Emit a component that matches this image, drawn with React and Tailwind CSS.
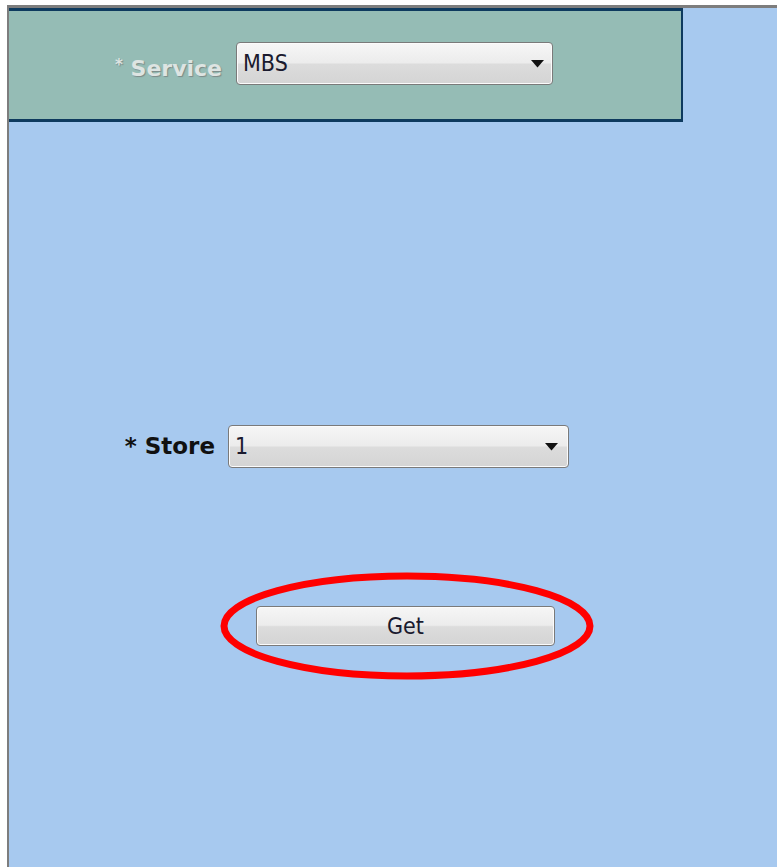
import React from "react";

const font = { fontFamily: '"DejaVu Sans", Verdana, sans-serif' };
const narrow = { fontFamily: '"DejaVu Sans Condensed", "DejaVu Sans", Tahoma, sans-serif' };

// glassy combo box like the old desktop theme
const Combo = ({ value, className, arrow }) => (
  <div
    className={`relative flex items-center rounded-[4px] border border-[#7a7a7a] bg-[linear-gradient(#f6f6f6_0%,#ececec_48%,#dcdcdc_52%,#d4d4d4_100%)] shadow-[inset_0_0_0_1px_#fbfbfb] ${className}`}
  >
    <span className="pl-[6px] text-[23px] leading-none text-[#1a1a2e]" style={narrow}>
      {value}
    </span>
    <svg
      className={`absolute top-1/2 -translate-y-1/2 ${arrow}`}
      width="13"
      height="8"
      viewBox="0 0 13 8"
    >
      <polygon points="0,0 13,0 6.5,7.5" fill="#111" />
    </svg>
  </div>
);

export default function App() {
  return (
    <div className="h-[867px] w-[777px] overflow-hidden bg-white pl-[7px] pt-[5px]" style={font}>
      <div className="relative h-full border-l-2 border-t-[3px] border-[#7d7d7d] bg-[#a7c9ef]">
        {/* service header panel */}
        <div className="flex h-[114px] w-[674px] items-start border-b-[3px] border-r-2 border-t-[3px] border-[#0e3a5e] bg-[#95bcb5] pl-[105px] pt-[31px]">
          <span className="mt-[16px] mr-[14px] w-[108px] whitespace-nowrap text-right text-[22px] font-bold leading-none text-[#dde4e2] [text-shadow:1px_1px_1px_#7c8a88]">
            <span className="text-[15px] align-top">*</span> Service
          </span>
          <Combo value="MBS" className="h-[43px] w-[317px]" arrow="right-[8px]" />
        </div>

        {/* store picker */}
        <div className="mt-[303px] flex items-center pl-[114px]">
          <span className="mr-[13px] w-[92px] whitespace-nowrap text-right text-[23px] font-bold leading-none text-[#111]">
            * Store
          </span>
          <Combo value="1" className="h-[43px] w-[341px]" arrow="right-[10px]" />
        </div>

        {/* action */}
        <div className="relative mt-[138px] pl-[247px]">
          <button
            className="flex h-[40px] w-[299px] items-center justify-center rounded-[4px] border border-[#7a7a7a] bg-[linear-gradient(#f6f6f6_0%,#ececec_48%,#dcdcdc_52%,#d4d4d4_100%)] text-[23px] leading-none text-[#1a1a2e] shadow-[inset_0_0_0_1px_#fbfbfb]"
            style={narrow}
          >
            Get
          </button>
          <svg
            className="pointer-events-none absolute left-[210px] top-[-35px]"
            width="376"
            height="110"
            viewBox="0 0 376 110"
          >
            <ellipse cx="188" cy="55" rx="183" ry="50" fill="none" stroke="#ff0000" strokeWidth="7" />
          </svg>
        </div>
      </div>
    </div>
  );
}
